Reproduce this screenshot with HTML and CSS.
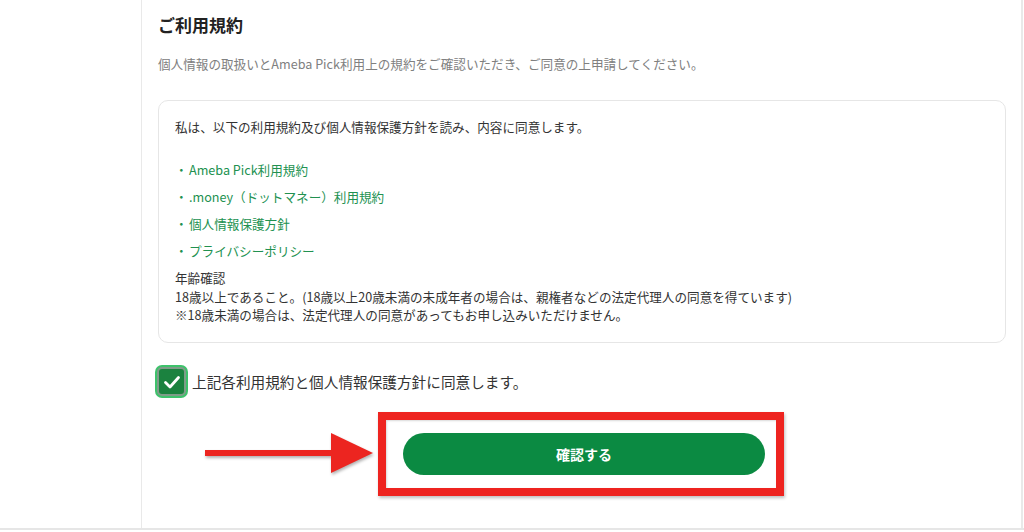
FILE: index.html
```html
<!DOCTYPE html>
<html lang="ja">
<head>
<meta charset="utf-8">
<title>ご利用規約</title>
<link rel="stylesheet" href="styles.css">
</head>
<body>
<div class="page">
  <aside class="sidebar"></aside>
  <main class="main">
    <h2 class="title">ご利用規約</h2>
    <p class="lead">個人情報の取扱いとAmeba Pick利用上の規約をご確認いただき、ご同意の上申請してください。</p>
    <div class="terms">
      <p class="intro">私は、以下の利用規約及び個人情報保護方針を読み、内容に同意します。</p>
      <ul class="links">
        <li><a href="#">Ameba Pick利用規約</a></li>
        <li><a href="#">.money（ドットマネー）利用規約</a></li>
        <li><a href="#">個人情報保護方針</a></li>
        <li><a href="#">プライバシーポリシー</a></li>
      </ul>
      <div class="age">
        <p>年齢確認</p>
        <p>18歳以上であること。(18歳以上20歳未満の未成年者の場合は、親権者などの法定代理人の同意を得ています)</p>
        <p>※18歳未満の場合は、法定代理人の同意があってもお申し込みいただけません。</p>
      </div>
    </div>
    <label class="agree">
      <span class="checkbox">
        <svg viewBox="0 0 20 20" width="20" height="20"><path d="M3.5 10.5 L8 15 L16.5 5.5" fill="none" stroke="#fff" stroke-width="2.8" stroke-linecap="round" stroke-linejoin="round"/></svg>
      </span>
      <span class="agree-text">上記各利用規約と個人情報保護方針に同意します。</span>
    </label>
    <div class="actions">
      <div class="btn-wrap">
        <button class="confirm" type="button">確認する</button>
        <span class="frame"></span>
        <svg class="arrow" viewBox="0 0 175 48" width="175" height="48">
          <rect x="4" y="20" width="130" height="6" fill="#ec2520"/>
          <polygon points="130,3 172,23 130,43" fill="#ec2520"/>
        </svg>
      </div>
    </div>
  </main>
</div>
</body>
</html>
```

FILE: styles.css
```css
* { box-sizing: border-box; }
html, body { margin: 0; padding: 0; background: #fff; }
body {
  font-family: "Noto Sans CJK JP", "Noto Sans", sans-serif;
  color: #333;
  width: 1024px;
  height: 532px;
  overflow: hidden;
}
.page {
  display: flex;
  height: 530px;
  border-bottom: 2px solid #e6e6e6;
}
.sidebar {
  width: 142px;
  flex: none;
  border-right: 1px solid #e9e9e9;
}
.main {
  width: 881px;
  flex: none;
  border-right: 2px solid #e9e9e9;
  padding: 13px 15px 0 16px;
}
.title {
  margin: 0;
  font-size: 17px;
  line-height: 24px;
  font-weight: 700;
  color: #222;
}
.lead {
  margin: 17px 0 0;
  font-size: 12.6px;
  line-height: 20px;
  color: #808080;
}
.terms {
  margin-top: 26px;
  border: 1px solid #e6e6e6;
  border-radius: 10px;
  padding: 17px 16px 17px 16px;
  height: 243px;
}
.intro {
  margin: 0;
  font-size: 12.6px;
  line-height: 18px;
  color: #333;
}
.links {
  list-style: none;
  margin: 20px 0 0;
  padding: 0;
}
.links li {
  font-size: 12.6px;
  line-height: 27px;
  height: 27px;
}
.links li::before {
  content: "・";
  display: inline-block;
  width: 14px;
  color: #219150;
}
.links a {
  color: #219150;
  text-decoration: none;
}
.age {
  margin-top: 5px;
}
.age p {
  margin: 0;
  font-size: 12.6px;
  line-height: 18.5px;
  color: #333;
}
.agree {
  display: flex;
  align-items: center;
  margin: 24px 0 0 -1px;
  height: 29px;
}
.checkbox {
  width: 29px;
  height: 29px;
  flex: none;
  border: 2px solid #7f9c89;
  border-radius: 5px;
  background: #1b823f;
  box-shadow: 0 0 0 2px #3ec26b;
  display: flex;
  align-items: center;
  justify-content: center;
}
.agree-text {
  margin-left: 6px;
  font-size: 14.65px;
  color: #333;
}
.actions {
  display: flex;
  justify-content: center;
  margin-top: 37px;
}
.btn-wrap {
  position: relative;
  margin-left: 4px;
}
.confirm {
  width: 362px;
  height: 42px;
  border: none;
  border-radius: 21px;
  background: #0b8a42;
  color: #fff;
  font-family: "Noto Sans CJK JP", "Noto Sans", sans-serif;
  font-size: 14px;
  font-weight: 700;
  display: block;
}
.frame {
  position: absolute;
  left: -25px;
  top: -21px;
  width: 406px;
  height: 84px;
  border: 8px solid #ee2420;
  box-shadow: 1px 2px 3px rgba(0,0,0,0.25), inset 1px 1px 2px rgba(0,0,0,0.15);
}
.arrow {
  position: absolute;
  left: -202px;
  top: -3px;
  filter: drop-shadow(1px 2px 1.5px rgba(0,0,0,0.3));
}
```
